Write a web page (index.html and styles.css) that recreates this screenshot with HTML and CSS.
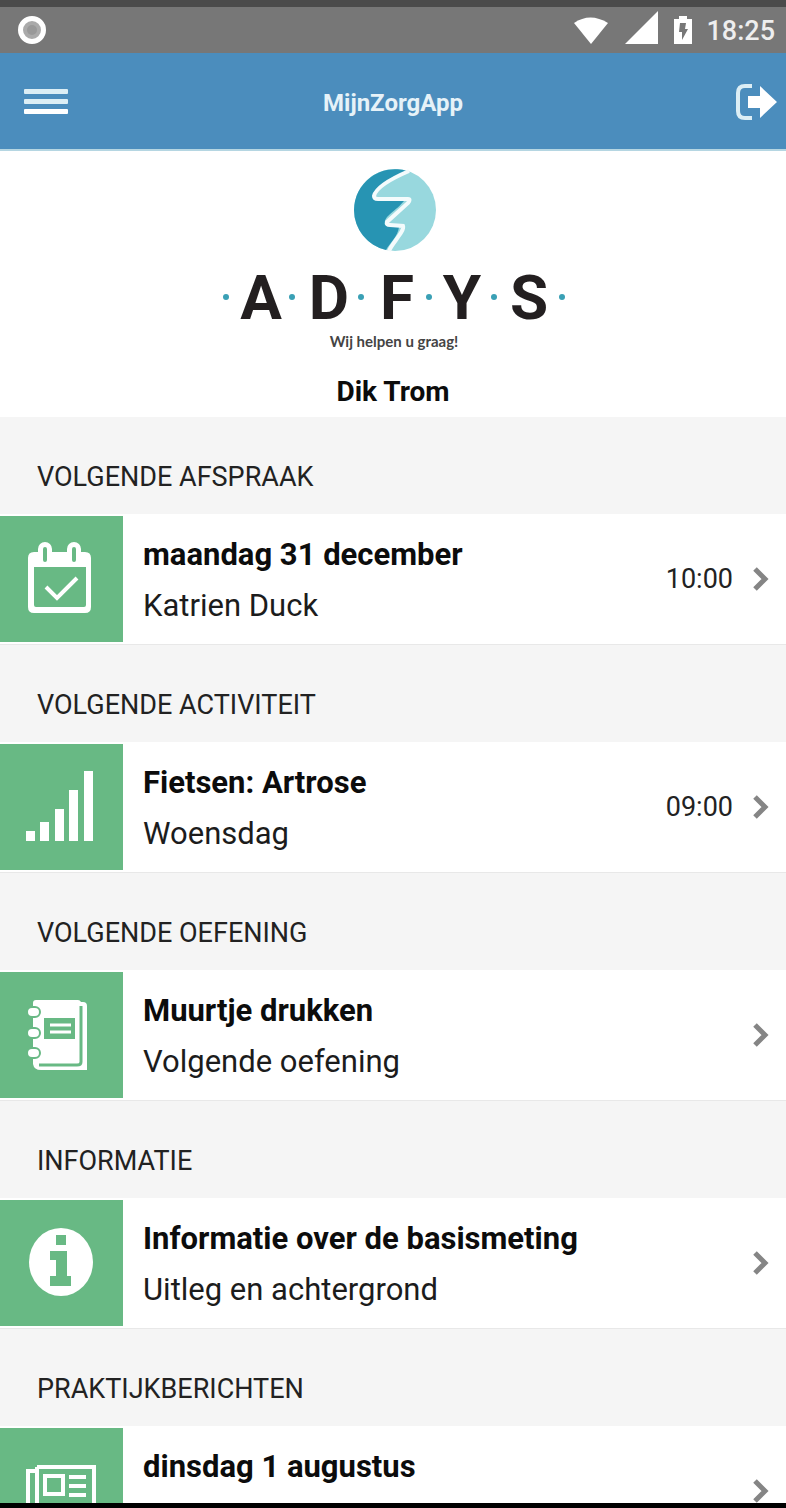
FILE: index.html
```
<!DOCTYPE html>
<html lang="nl">
<head>
<meta charset="utf-8">
<meta name="viewport" content="width=device-width, initial-scale=1">
<title>MijnZorgApp</title>
<link rel="stylesheet" href="styles.css">
</head>
<body>
<div class="screen">
  <div class="status">
    <svg class="status-dot" viewBox="0 0 30 30" width="30" height="30" aria-hidden="true"><circle cx="15" cy="15" r="11.5" fill="#aaa" stroke="#fff" stroke-width="5"/><circle cx="15" cy="15" r="5" fill="#999"/></svg>
    <div class="status-right">
      <svg class="status-signals" viewBox="0 0 120 36" width="120" height="36" fill="#fff" aria-hidden="true">
        <path d="M2 11Q18 0 36 11L19 32Z"/>
        <path d="M53 32L86 -1V32Z"/>
        <path d="M102 7h5V4h8v3h5v25h-18z"/>
        <path d="M108 11h6l-1 6h3l-6 11v-8h-3z" fill="#777"/>
      </svg>
      <span class="clock">18:25</span>
    </div>
  </div>
  <header class="bar">
    <button class="bar-button bar-button-start" type="button" aria-label="Menu">
      <svg viewBox="0 0 44 28" width="44" height="28" fill="#dceef5"><rect y="1" width="44" height="5" rx="1"/><rect y="11" width="44" height="5" rx="1"/><rect y="21" width="44" height="5" rx="1" fill="#fff"/></svg>
    </button>
    <h1 class="title">MijnZorgApp</h1>
    <button class="bar-button bar-button-end" type="button" aria-label="Uitloggen">
      <svg viewBox="0 0 42 36" width="42" height="36"><path d="M16 2H9Q2 2 2 9V27Q2 34 9 34H16" fill="none" stroke="#dceef5" stroke-width="4"/><path d="M12 12H24V2L41 18L24 34V24H12Z" fill="#fff"/></svg>
    </button>
  </header>
  <main class="content">
    <section class="profile">
      <svg class="logo" viewBox="0 0 376 190" width="376" height="190" role="img" aria-label="ADFYS">
        <circle cx="190" cy="42" r="41" fill="#98d8de"/>
        <path d="M202 3A41 41 0 0 0 149 42A41 41 0 0 0 181 82C185 75 193 68 194 59L180 57C178 48 190 44 199 33L170 31C168 19 188 9 202 3Z" fill="#2794b3"/>
        <path d="M204 3C190 9 171 19 169 28Q169 31 173 31L203 31Q206 31 203 35L182 54Q181 57 185 57L198 58C200 63 187 75 184 83" fill="none" stroke="#f4fbfc" stroke-width="4"/>
        <g class="logo-name">
          <text x="56" y="151">A</text><text x="124" y="151">D</text><text x="192" y="151">F</text><text x="257" y="151">Y</text><text x="324" y="151">S</text>
        </g>
        <g fill="#3aa0b5"><circle cx="21" cy="129" r="3"/><circle cx="87" cy="129" r="3"/><circle cx="156" cy="129" r="3"/><circle cx="224" cy="129" r="3"/><circle cx="289" cy="129" r="3"/><circle cx="357" cy="129" r="3"/></g>
        <text class="logo-tagline" x="189" y="179">Wij helpen u graag!</text>
      </svg>
      <p class="user">Dik Trom</p>
    </section>

    <section>
      <h2 class="heading">VOLGENDE AFSPRAAK</h2>
      <a class="row" href="#afspraak">
        <span class="tile"><svg viewBox="0 0 72 76" width="72" height="76" aria-hidden="true">
          <path fill="#fff" fill-rule="evenodd" d="M8 11h4V8a7 7 0 0 1 14 0v3h15V8a7 7 0 0 1 14 0v3h4q6 0 6 6V66q0 6-6 6H8q-6 0-6-6V17q0-6 6-6zM8 26V64q0 2 2 2H58q2 0 2-2V26z"/>
          <path d="M19 8V19M48 8V19" stroke="#68b984" stroke-width="4" stroke-linecap="round"/>
          <path d="M20 46L31 57L51 37" fill="none" stroke="#fff" stroke-width="4"/></svg></span>
        <span class="texts"><strong class="name">maandag 31 december</strong><span class="detail">Katrien Duck</span></span>
        <span class="time">10:00</span>
        <svg class="chevron" viewBox="0 0 18 26" width="18" height="26" aria-hidden="true"><path d="M3 3L13 13L3 23"/></svg>
      </a>
    </section>

    <section>
      <h2 class="heading">VOLGENDE ACTIVITEIT</h2>
      <a class="row" href="#activiteit">
        <span class="tile"><svg viewBox="0 0 72 76" width="72" height="76" fill="#fff" aria-hidden="true"><path d="M0 62h9v10H0zM14 53h9v19h-9zM29 40h9v32h-9zM43 21h9v51h-9zM58 2h9v70h-9z"/></svg></span>
        <span class="texts"><strong class="name">Fietsen: Artrose</strong><span class="detail">Woensdag</span></span>
        <span class="time">09:00</span>
        <svg class="chevron" viewBox="0 0 18 26" width="18" height="26" aria-hidden="true"><path d="M3 3L13 13L3 23"/></svg>
      </a>
    </section>

    <section>
      <h2 class="heading">VOLGENDE OEFENING</h2>
      <a class="row" href="#oefening">
        <span class="tile"><svg viewBox="0 0 72 76" width="72" height="76" aria-hidden="true">
          <path d="M10 3H52Q54 3 55 5H57Q61 5 61 9V73H15Q8 73 7 67V6Q7 3 10 3Z" fill="#fff"/>
          <path d="M55 9V65Q55 68 51 68H13" fill="none" stroke="#68b984" stroke-width="3"/>
          <g fill="#fff" stroke="#68b984" stroke-width="2"><rect x="1" y="10" width="13" height="10" rx="5"/><rect x="1" y="31" width="13" height="10" rx="5"/><rect x="1" y="51" width="13" height="10" rx="5"/></g>
          <rect x="18" y="21" width="31" height="21" fill="#68b984"/><path d="M24 28H45M24 35H45" stroke="#fff" stroke-width="3"/></svg></span>
        <span class="texts"><strong class="name">Muurtje drukken</strong><span class="detail">Volgende oefening</span></span>
        <svg class="chevron" viewBox="0 0 18 26" width="18" height="26" aria-hidden="true"><path d="M3 3L13 13L3 23"/></svg>
      </a>
    </section>

    <section>
      <h2 class="heading">INFORMATIE</h2>
      <a class="row" href="#informatie">
        <span class="tile"><svg viewBox="0 0 72 76" width="72" height="76" aria-hidden="true"><ellipse cx="35" cy="37" rx="32" ry="34" fill="#fff"/><path d="M30 10h10v10H30zM24 26h17v25h4v10H24V51h6V35h-6z" fill="#68b984"/></svg></span>
        <span class="texts"><strong class="name">Informatie over de basismeting</strong><span class="detail">Uitleg en achtergrond</span></span>
        <svg class="chevron" viewBox="0 0 18 26" width="18" height="26" aria-hidden="true"><path d="M3 3L13 13L3 23"/></svg>
      </a>
    </section>

    <section>
      <h2 class="heading">PRAKTIJKBERICHTEN</h2>
      <a class="row" href="#berichten">
        <span class="tile"><svg viewBox="0 0 72 76" width="72" height="76" fill="none" stroke="#fff" stroke-width="4" aria-hidden="true"><path d="M11 14H68V65H7Q2 65 2 60V18H11M11 14V60Q11 63 8 65"/><rect x="19" y="23" width="18" height="18"/><path d="M43 24H60M43 33H60M43 42H60M17 52H60"/></svg></span>
        <span class="texts"><strong class="name">dinsdag 1 augustus</strong></span>
        <svg class="chevron" viewBox="0 0 18 26" width="18" height="26" aria-hidden="true"><path d="M3 3L13 13L3 23"/></svg>
      </a>
    </section>
  </main>
</div>
</body>
</html>
```
FILE: styles.css
```
* { box-sizing: border-box; }

body {
  margin: 0;
  background: #fff;
  color: #0c0c0c;
  font-family: Roboto, "Liberation Sans", sans-serif;
}

svg { display: block; flex: none; }

.screen {
  display: flex;
  flex-direction: column;
  height: 100vh;
  border-bottom: 5px solid #000;
  overflow: hidden;
}

.status {
  display: flex;
  flex: none;
  align-items: center;
  justify-content: space-between;
  height: 53px;
  padding: 0 11px 0 17px;
  border-top: 7px solid #4b4b4b;
  background: #777;
}

.status-right { display: flex; align-items: center; gap: 14px; }

.status-signals { overflow: visible; }

.clock {
  padding-top: 2px;
  color: #eee;
  font-size: 27px;
  font-weight: 500;
  line-height: 32px;
}

.bar {
  display: grid;
  grid-template-columns: 1fr auto 1fr;
  flex: none;
  align-items: center;
  height: 98px;
  padding: 2px 8px 0;
  border-bottom: 2px solid #b5d6e2;
  background: #4b8dbd;
}

.bar-button {
  padding: 0;
  border: 0;
  background: none;
}

.bar-button-start { justify-self: start; padding-left: 16px; }

.bar-button-end { justify-self: end; }

.title {
  margin: 0;
  padding-top: 2px;
  color: #e6f2f8;
  font-size: 24px;
  font-weight: 700;
  line-height: 32px;
}

.content {
  flex: 1;
  min-height: 0;
  overflow: hidden;
  background: #f5f5f5;
}

.profile {
  display: flex;
  flex-direction: column;
  align-items: center;
  padding: 17px 0 8px;
  background: #fff;
}

.logo-name {
  fill: #231f20;
  font-family: Roboto, sans-serif;
  font-size: 62px;
  font-weight: 700;
  text-anchor: middle;
}

.logo-tagline {
  fill: #444;
  font-family: Lato, sans-serif;
  font-size: 15px;
  font-weight: 700;
  text-anchor: middle;
}

.user {
  margin: 16px 0 0;
  font-size: 28px;
  font-weight: 700;
  line-height: 35px;
}

.heading {
  margin: 0;
  padding: 42px 37px 19px;
  color: #222;
  font-size: 27px;
  font-weight: 400;
  line-height: 36px;
}

.row {
  display: flex;
  align-items: center;
  height: 131px;
  padding: 0 16px 0 0;
  border-bottom: 1px solid #e8e8e8;
  background: #fff;
  color: inherit;
  text-decoration: none;
}

.tile {
  display: flex;
  flex: none;
  align-items: center;
  width: 123px;
  height: 126px;
  padding-left: 26px;
  background: #68b984;
}

.texts {
  display: flex;
  flex: 1;
  flex-direction: column;
  align-self: flex-start;
  min-width: 0;
  padding: 15px 0 0 20px;
  line-height: 51px;
}

.name { font-size: 31px; font-weight: 700; }

.detail { color: #1c1c1c; font-size: 31px; }

.time { color: #222; font-size: 27px; line-height: 36px; }

.chevron {
  margin-left: 19px;
  fill: none;
  stroke: #858585;
  stroke-width: 5;
}
```
